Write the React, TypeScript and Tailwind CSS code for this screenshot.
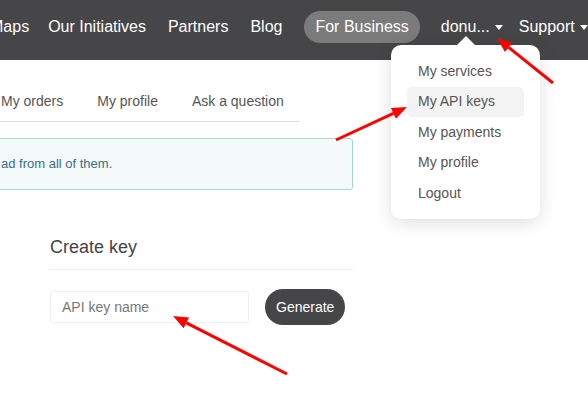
import { useState } from "react";

const navLinks = ["Maps", "Our Initiatives", "Partners", "Blog"];
const menuItems = ["My services", "My API keys", "My payments", "My profile", "Logout"];
const tabs = ["My orders", "My profile", "Ask a question"];

function Caret() {
  return (
    <svg width="8" height="5" viewBox="0 0 8 5" className="ml-[5px] mt-[2px]">
      <path d="M0 0h8L4 5z" fill="#fff" />
    </svg>
  );
}

function Arrow({ x1, y1, x2, y2 }: { x1: number; y1: number; x2: number; y2: number }) {
  const a = Math.atan2(y2 - y1, x2 - x1);
  const len = 15;
  const w = 6;
  const bx = x2 - len * Math.cos(a);
  const by = y2 - len * Math.sin(a);
  const p1 = `${bx + w * Math.sin(a)},${by - w * Math.cos(a)}`;
  const p2 = `${bx - w * Math.sin(a)},${by + w * Math.cos(a)}`;
  return (
    <g>
      <line x1={x1} y1={y1} x2={bx} y2={by} stroke="#ff0000" strokeWidth="3" />
      <polygon points={`${x2},${y2} ${p1} ${p2}`} fill="#ff0000" />
    </g>
  );
}

export default function App() {
  const [keyName, setKeyName] = useState("");

  return (
    <main className="relative w-[588px] h-[395px] overflow-hidden bg-white font-['Liberation_Sans',Arial,sans-serif]">
      <nav className="h-[60px] bg-[#464547] flex items-center pb-[7px] text-white text-[16px] overflow-hidden">
        <div className="flex items-center gap-[22px] ml-[-10px] whitespace-nowrap">
          {navLinks.map((l, i) => (
            <span key={l} className={i === 0 ? "mr-[-3px]" : ""}>{l}</span>
          ))}
          <span className="rounded-full bg-[#7b7b7b] px-[11px] h-[32px] flex items-center">For Business</span>
          <span className="flex items-center ml-[-1px]">donu...<Caret /></span>
          <span className="flex items-center ml-[-6px]">Support<Caret /></span>
        </div>
      </nav>

      <section className="w-[353px]">
        <ul className="flex ml-[-16px] w-[316px] mt-[21px] border-b border-[#ddd] text-[14px] text-[#555]">
          {tabs.map(t => (
            <li key={t} className="px-[17px] h-[40px] flex items-center whitespace-nowrap">{t}</li>
          ))}
        </ul>

        <div className="mt-[16px] ml-[-20px] h-[52px] border border-[#a3d9d0] bg-[#f4fafa] rounded-[3px] flex items-center pl-[20px] text-[13px] text-[#3b6e85] whitespace-nowrap">
          ad from all of them.
        </div>

        <div className="ml-[50px] mt-[46px]">
          <h2 className="text-[18px] text-[#444] pb-[11px] border-b border-[#eee] leading-[22px]">Create key</h2>
          <div className="flex items-center gap-[16px] mt-[19px]">
            <input
              value={keyName}
              onChange={e => setKeyName(e.target.value)}
              placeholder="API key name"
              className="w-[199px] h-[32px] border border-[#eee] rounded-[3px] px-[11px] text-[14px] text-[#555] placeholder:text-[#777] outline-none"
            />
            <button className="h-[36px] px-[11px] rounded-full bg-[#464547] text-white text-[14px]">Generate</button>
          </div>
        </div>
      </section>

      <div className="absolute left-[391px] top-[45px] w-[149px] bg-white rounded-[10px] shadow-[0_4px_18px_rgba(0,0,0,0.13)] pt-[11px] pb-[10px] px-[16px]">
        <div className="absolute top-[-9px] left-[66px] w-0 h-0 border-l-[9px] border-r-[9px] border-b-[9px] border-l-transparent border-r-transparent border-b-white" />
        {menuItems.map(m => (
          <div
            key={m}
            className={
              "h-[30.5px] flex items-center px-[11px] rounded-[5px] text-[14px] text-[#555] " +
              (m === "My API keys" ? "bg-[#f3f3f3]" : "")
            }
          >
            {m}
          </div>
        ))}
      </div>

      <svg className="absolute inset-0 pointer-events-none" width="588" height="395">
        <Arrow x1={553} y1={83} x2={497} y2={38} />
        <Arrow x1={336} y1={140} x2={407} y2={107} />
        <Arrow x1={287} y1={374} x2={173} y2={316} />
      </svg>
    </main>
  );
}
